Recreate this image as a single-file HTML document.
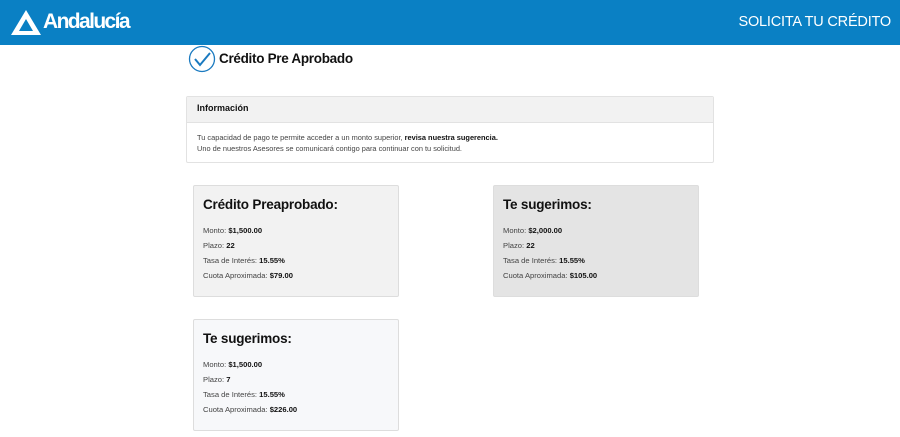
<!DOCTYPE html>
<html><head><meta charset="utf-8"><style>
body{margin:0;width:900px;height:437px;overflow:hidden;background:#fff;font-family:"Liberation Sans",sans-serif;color:#222;position:relative}
.hdr{position:absolute;left:0;top:0;width:900px;height:45px;background:#0a80c4}
.logo{position:absolute;left:43px;top:10px;color:#fff;font-size:21px;font-weight:bold;letter-spacing:-1.6px}
.sol{position:absolute;right:9px;top:14px;color:#fff;font-size:14.5px;letter-spacing:-0.2px}
.ttl{position:absolute;left:219px;top:51px;font-size:13.5px;font-weight:bold;color:#111;letter-spacing:-0.3px}
.info{position:absolute;left:186px;top:96px;width:526px;height:65px;border:1px solid #e2e2e2;border-radius:2px}
.ih{height:25px;background:#f2f2f2;border-bottom:1px solid #e2e2e2;font-size:9px;font-weight:bold;padding-left:10px;line-height:22px;color:#111}
.ib{font-size:7.4px;padding:9px 0 0 10px;line-height:11px;color:#444}
.card{position:absolute;width:206px;height:112px;border:1px solid #ddd;border-radius:2px;box-sizing:border-box;padding:11px 9px}
.card h2{margin:0 0 14px;font-size:13.5px;font-weight:bold;color:#111;letter-spacing:-0.2px}
.card p{margin:0 0 6px;font-size:7.6px;color:#444;line-height:9px}
.card b{color:#111}
</style></head><body>
<div class="hdr">
<svg style="position:absolute;left:9px;top:8px" width="34" height="29" viewBox="0 0 34 29"><path d="M17 2 L32 27 L2 27 Z M17 11 L10 23 L24 23 Z" fill="#fff" fill-rule="evenodd"/></svg>
<div class="logo">Andalucía</div>
<div class="sol">SOLICITA TU CRÉDITO</div>
</div>
<svg style="position:absolute;left:188px;top:45px" width="28" height="28" viewBox="0 0 28 28"><circle cx="14" cy="14" r="12.5" fill="none" stroke="#1a7ac0" stroke-width="1.3"/><path d="M7 14 L12 20 L22 8" fill="none" stroke="#1a7ac0" stroke-width="2"/></svg>
<div class="ttl">Crédito Pre Aprobado</div>
<div class="info"><div class="ih">Información</div><div class="ib">Tu capacidad de pago te permite acceder a un monto superior, <b style="color:#111">revisa nuestra sugerencia.</b><br>Uno de nuestros Asesores se comunicará contigo para continuar con tu solicitud.</div></div>
<div class="card" style="left:193px;top:185px;background:#f2f2f2"><h2>Crédito Preaprobado:</h2><p>Monto: <b>$1,500.00</b></p><p>Plazo: <b>22</b></p><p>Tasa de Interés: <b>15.55%</b></p><p>Cuota Aproximada: <b>$79.00</b></p></div>
<div class="card" style="left:493px;top:185px;background:#e4e4e4"><h2>Te sugerimos:</h2><p>Monto: <b>$2,000.00</b></p><p>Plazo: <b>22</b></p><p>Tasa de Interés: <b>15.55%</b></p><p>Cuota Aproximada: <b>$105.00</b></p></div>
<div class="card" style="left:193px;top:319px;background:#f7f8fa"><h2>Te sugerimos:</h2><p>Monto: <b>$1,500.00</b></p><p>Plazo: <b>7</b></p><p>Tasa de Interés: <b>15.55%</b></p><p>Cuota Aproximada: <b>$226.00</b></p></div>
</body></html>
